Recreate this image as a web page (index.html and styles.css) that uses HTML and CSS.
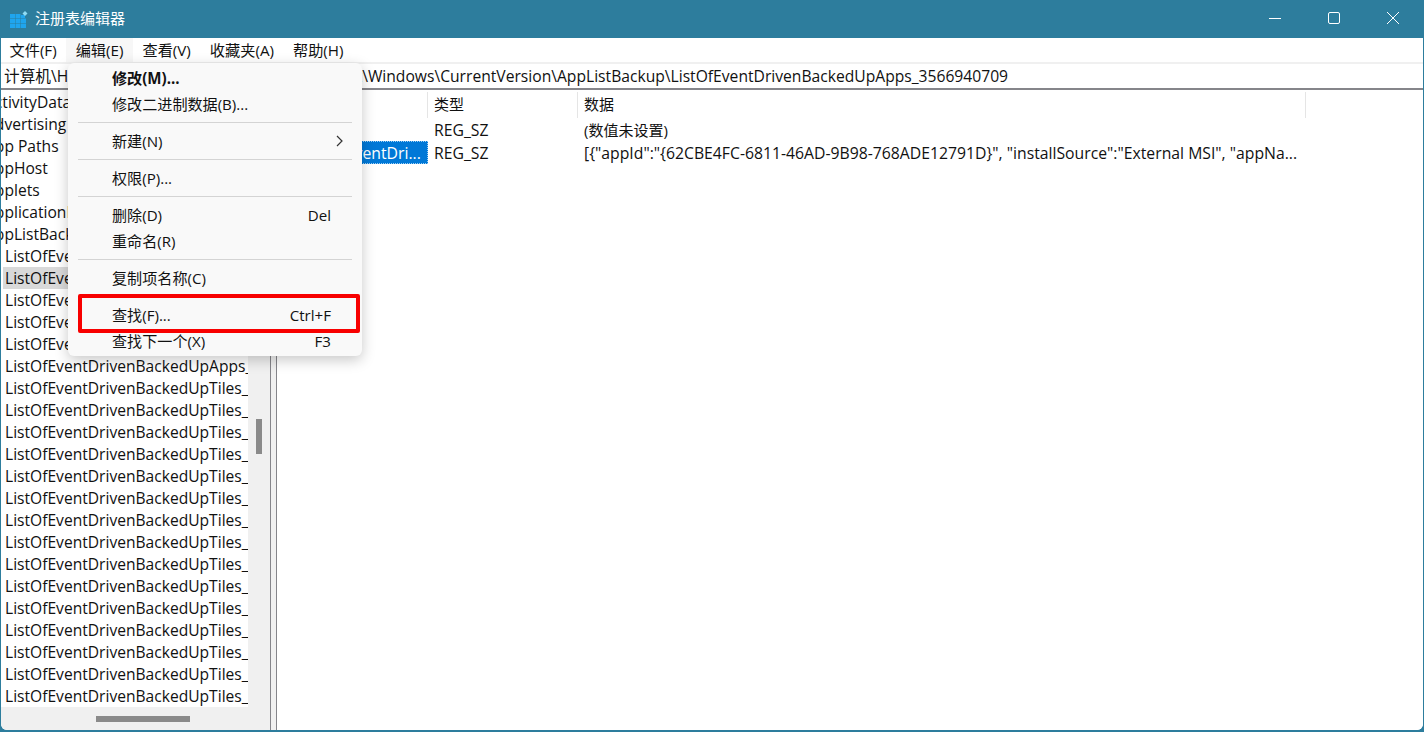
FILE: index.html
```html
<!DOCTYPE html>
<html lang="zh-CN">
<head>
<meta charset="utf-8">
<title>注册表编辑器</title>
<link rel="stylesheet" href="styles.css">
</head>
<body>
<div class="window">
  <header class="titlebar">
    <svg class="app-icon" width="18" height="18" viewBox="0 0 18 18">
      <g fill="#1fa5ee">
        <rect x="0" y="3" width="5" height="4"/><rect x="5.5" y="3" width="5" height="4"/><rect x="11" y="4" width="4" height="3"/>
        <rect x="0" y="7.5" width="5" height="4.5"/><rect x="5.5" y="7.5" width="5" height="4.5"/><rect x="11" y="7.5" width="5" height="4.5"/>
        <rect x="0" y="12.500" width="5" height="4.500"/><rect x="5.500" y="12.500" width="5" height="4.500"/><rect x="11" y="12.500" width="5" height="4.500"/>
      </g>
      <path d="M15 0l2.500 2.500L15 5l-2.500-2.500z" fill="#8fdcf5"/>
    </svg>
    <span class="title">注册表编辑器</span>
    <div class="controls">
      <svg class="ctl" width="12" height="12" viewBox="0 0 12 12"><path d="M0 6.500h12" stroke="#fff" fill="none"/></svg>
      <svg class="ctl" width="12" height="12" viewBox="0 0 12 12"><rect x=".5" y=".5" width="11" height="11" rx="1.500" stroke="#fff" fill="none"/></svg>
      <svg class="ctl" width="12" height="12" viewBox="0 0 12 12"><path d="M0 0l12 12M12 0L0 12" stroke="#fff" fill="none"/></svg>
    </div>
  </header>
  <nav class="menubar">
    <span class="menu-item">文件(F)</span>
    <span class="menu-item active">编辑(E)</span>
    <span class="menu-item">查看(V)</span>
    <span class="menu-item">收藏夹(A)</span>
    <span class="menu-item">帮助(H)</span>
  </nav>
  <div class="address">计算机\HKEY_CURRENT_USER\Software\Microsoft\Windows\CurrentVersion\AppListBackup\ListOfEventDrivenBackedUpApps_3566940709</div>
  <main class="panes">
    <aside class="tree-pane">
      <div class="tree-scroll">
        <ul class="tree">
          <li class="root">ActivityDataModel</li>
          <li class="root">Advertising</li>
          <li class="root">App Paths</li>
          <li class="root">AppHost</li>
          <li class="root">Applets</li>
          <li class="root">ApplicationFrame</li>
          <li class="root">AppListBackup</li>
          <li>ListOfEventDrivenBackedUpApps_</li>
          <li class="selected">ListOfEventDrivenBackedUpApps_</li>
          <li>ListOfEventDrivenBackedUpApps_</li>
          <li>ListOfEventDrivenBackedUpApps_</li>
          <li>ListOfEventDrivenBackedUpApps_</li>
          <li>ListOfEventDrivenBackedUpApps_</li>
          <li>ListOfEventDrivenBackedUpTiles_</li>
          <li>ListOfEventDrivenBackedUpTiles_</li>
          <li>ListOfEventDrivenBackedUpTiles_</li>
          <li>ListOfEventDrivenBackedUpTiles_</li>
          <li>ListOfEventDrivenBackedUpTiles_</li>
          <li>ListOfEventDrivenBackedUpTiles_</li>
          <li>ListOfEventDrivenBackedUpTiles_</li>
          <li>ListOfEventDrivenBackedUpTiles_</li>
          <li>ListOfEventDrivenBackedUpTiles_</li>
          <li>ListOfEventDrivenBackedUpTiles_</li>
          <li>ListOfEventDrivenBackedUpTiles_</li>
          <li>ListOfEventDrivenBackedUpTiles_</li>
          <li>ListOfEventDrivenBackedUpTiles_</li>
          <li>ListOfEventDrivenBackedUpTiles_</li>
          <li>ListOfEventDrivenBackedUpTiles_</li>
        </ul>
        <div class="vscroll"><span class="vthumb"></span></div>
      </div>
      <div class="hscroll"><span class="hthumb"></span></div>
    </aside>
    <div class="splitter"></div>
    <section class="list-pane">
      <div class="list-row list-head">
        <span class="col-name">名称</span>
        <span class="col-type">类型</span>
        <span class="col-data">数据</span>
      </div>
      <div class="list-row">
        <span class="col-name"><span class="value-name">(默认)</span></span>
        <span class="col-type">REG_SZ</span>
        <span class="col-data cjk-cell">(数值未设置)</span>
      </div>
      <div class="list-row">
        <span class="col-name"><span class="value-name value-selected">ListOfEventDri...</span></span>
        <span class="col-type">REG_SZ</span>
        <span class="col-data">[{"appId":"{62CBE4FC-6811-46AD-9B98-768ADE12791D}", "installSource":"External MSI", "appNa...</span>
      </div>
    </section>
  </main>

  <div class="context-menu">
    <div class="cm-group">
      <div class="cm-item bold"><span>修改(M)...</span></div>
      <div class="cm-item"><span>修改二进制数据(B)...</span></div>
    </div>
    <div class="cm-group">
      <div class="cm-item"><span>新建(N)</span>
        <svg width="7" height="12" viewBox="0 0 7 12" class="chev"><path d="M1 1l5 5-5 5" stroke="#333" stroke-width="1.200" fill="none"/></svg>
      </div>
    </div>
    <div class="cm-group">
      <div class="cm-item"><span>权限(P)...</span></div>
    </div>
    <div class="cm-group">
      <div class="cm-item"><span>删除(D)</span><span>Del</span></div>
      <div class="cm-item"><span>重命名(R)</span></div>
    </div>
    <div class="cm-group">
      <div class="cm-item"><span>复制项名称(C)</span></div>
    </div>
    <div class="cm-group">
      <div class="cm-item"><span>查找(F)...</span><span>Ctrl+F</span></div>
      <div class="cm-item"><span>查找下一个(X)</span><span>F3</span></div>
    </div>
  </div>
  <div class="highlight-box"></div>
</div>
</body>
</html>
```
FILE: styles.css
```css
* { box-sizing: border-box; }
html, body { margin: 0; height: 100%; overflow: hidden; background: #2d7d9d; }
body { font-family: "Noto Sans CJK SC", sans-serif; }
.window {
  position: relative;
  width: 1424px;
  height: 732px;
  display: flex;
  flex-direction: column;
  background: #2d7d9d;
  padding: 0 1px 2px 1px;
  font: 15.75px/22px "Open Sans", "Noto Sans CJK SC", sans-serif;
  color: #111;
}
.titlebar {
  height: 38px;
  display: flex;
  align-items: center;
  margin: 0 -1px;
  padding: 0 0 2px 10px;
  color: #fff;
  flex: none;
}
.app-icon { flex: none; margin-top: 3px; }
.title { margin-left: 7px; font: 15px/20px "Noto Sans CJK SC", sans-serif; }
.controls { margin-left: auto; display: flex; gap: 47px; padding-right: 25px; }
.ctl { display: block; }
.menubar {
  height: 24px;
  flex: none;
  display: flex;
  background: #fff;
  font: 15.2px/24px "Open Sans", "Noto Sans CJK SC", sans-serif;
}
.menu-item { padding: 0 9.5px; white-space: nowrap; }
.menu-item:first-child { padding-left: 8.5px; }
.menu-item.active { background: #f7f7f7; }
.address {
  flex: none;
  height: 28px;
  border-top: 2px solid #f0f0f0;
  border-bottom: 2px solid #85858a;
  background: #fff;
  padding-left: 3px;
  font-size: 15.65px;
  line-height: 25px;
  white-space: nowrap;
  overflow: hidden;
}
.panes {
  flex: 1;
  min-height: 0;
  display: flex;
  background: #fff;
  border-bottom-left-radius: 6px;
  border-bottom-right-radius: 6px;
  overflow: hidden;
}
.tree-pane {
  width: 269px;
  flex: none;
  display: flex;
  flex-direction: column;
  background: #f0f0f0;
}
.tree-scroll { flex: 1; min-height: 0; display: flex; }
.tree {
  list-style: none;
  margin: 0;
  padding: 1px 0 0 0;
  width: 247px;
  background: #fff;
  height: 617px;
  overflow: hidden;
  font-size: 15.6px;
}
.tree li {
  height: 22px;
  line-height: 23px;
  padding-left: 4px;
  white-space: nowrap;
  overflow: hidden;
}
.tree li.root { text-indent: -20px; }
.tree li.selected { background: #d9d9d9; margin-left: 2px; padding-left: 2px; }
.vscroll { flex: 1; position: relative; display: flex; justify-content: center; padding-top: 329px; }
.vthumb { display: block; width: 6px; height: 35px; background: #8a8a8a; }
.hscroll { height: 22px; flex: none; display: flex; padding: 8px 0 0 95px; }
.hthumb { display: block; width: 94px; height: 6px; background: #8a8a8a; }
.splitter {
  width: 7px;
  flex: none;
  background: #f0f0f0;
  border-left: 1px solid #85858a;
  border-right: 1px solid #85858a;
}
.list-pane { flex: 1; min-width: 0; background: #fff; }
.list-row { display: flex; height: 23px; line-height: 24px; white-space: nowrap; }
.list-head { height: 28px; padding-top: 2px; line-height: 24px; font-size: 15px; }
.col-name { width: 151px; flex: none; overflow: hidden; }
.col-type { width: 150px; padding-left: 6px; flex: none; }
.col-data { width: 728px; padding-left: 6px; flex: none; }
.cjk-cell { font-size: 15px; }
.list-head .col-name { padding-left: 6px; }
.list-head span { border-right: 1px solid #e5e5e5; height: 26px; }
.value-name { display: block; margin-left: 20px; padding-left: 6px; }
.value-selected {
  height: 23px;
  background: #0078d7;
  color: #fff;
  outline: 1px dotted #9fd0f5;
  outline-offset: -1px;
}
.context-menu {
  position: absolute;
  left: 68px;
  top: 63px;
  width: 294px;
  height: 293px;
  background: #f9f9f9;
  border-radius: 6px;
  box-shadow: 0 4px 14px rgba(0, 0, 0, .22);
  padding: 2px 10px;
  font: 15.1px/25px "Open Sans", "Noto Sans CJK SC", sans-serif;
}
.cm-group { padding: 0 0 5px; border-bottom: 1px solid #d4d4d4; margin-bottom: 5px; }
.cm-group:last-child { border: 0; margin: 0; padding: 0; }
.cm-item {
  height: 26px;
  display: flex;
  justify-content: space-between;
  align-items: center;
  padding: 0 21px 0 34px;
  white-space: nowrap;
}
.cm-item.bold { font-weight: 700; }
.chev { margin-right: -12px; }
.highlight-box {
  position: absolute;
  left: 78px;
  top: 294px;
  width: 282px;
  height: 39px;
  border: 4px solid #f80000;
  border-radius: 2px;
}
```
